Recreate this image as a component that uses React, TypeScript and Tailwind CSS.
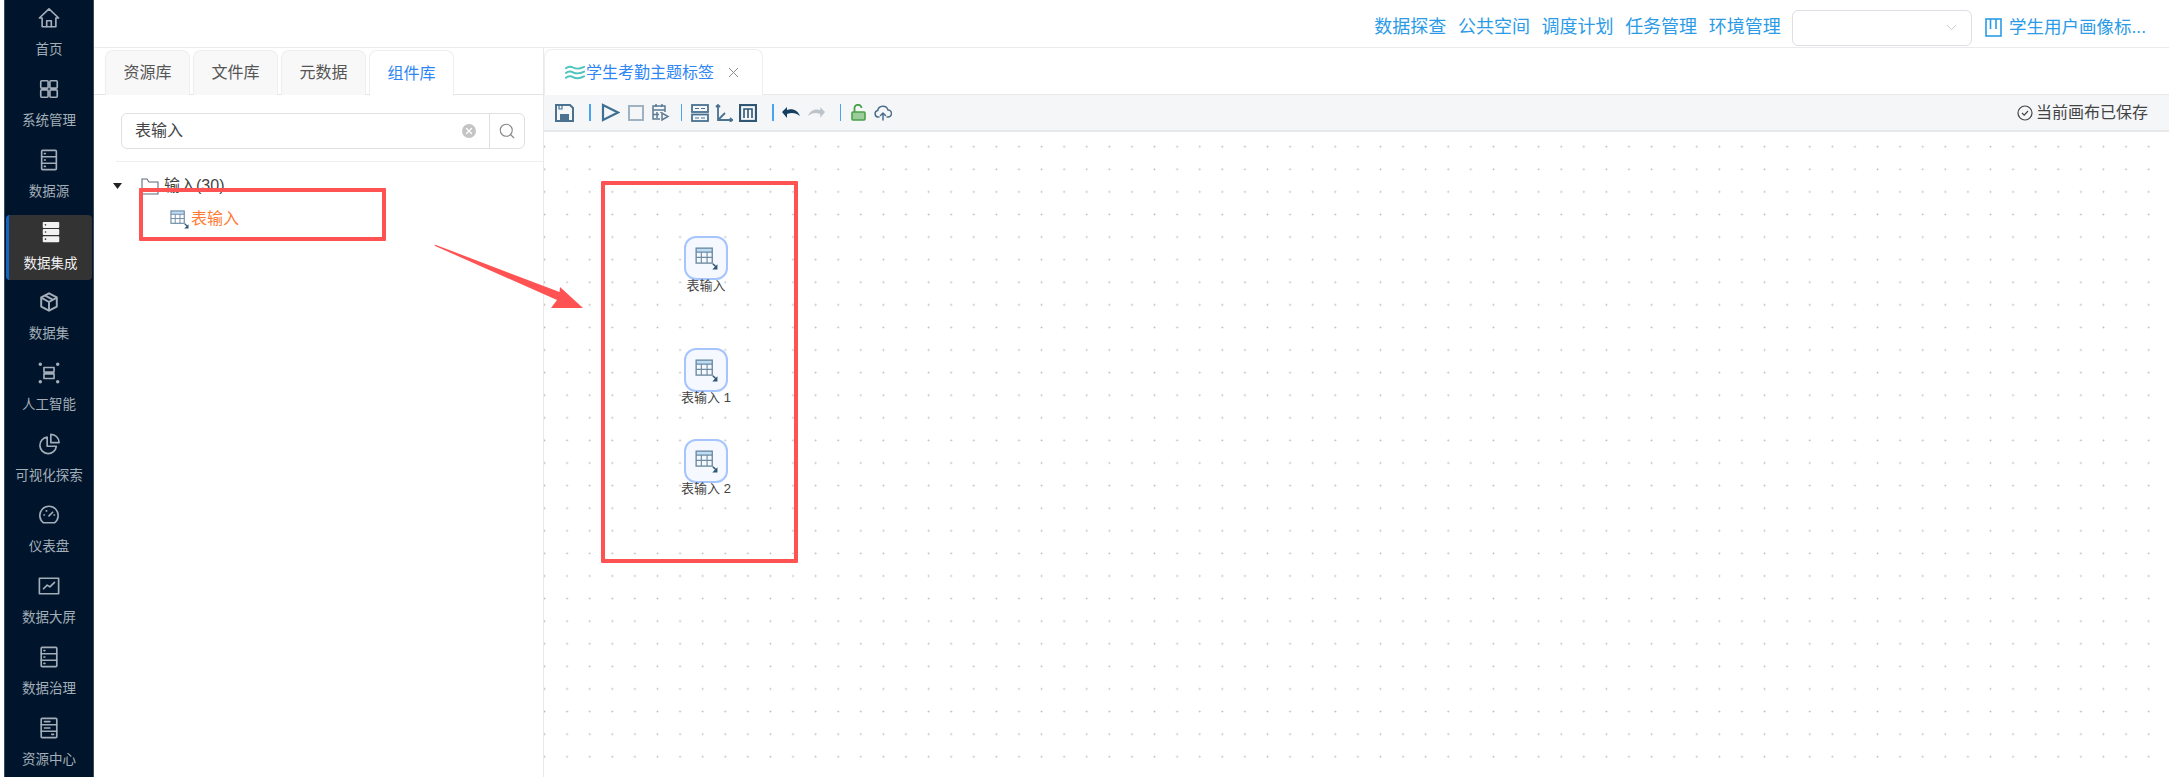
import { ReactNode } from "react";
import { ChevronDown, Search, X } from "lucide-react";

function Ico({ children, w = 22, h = 22, vb = "0 0 24 24", sw = 1.8 }: { children: ReactNode; w?: number; h?: number; vb?: string; sw?: number }) {
  return (
    <svg width={w} height={h} viewBox={vb} fill="none" stroke="currentColor" strokeWidth={sw} strokeLinejoin="round" strokeLinecap="round">
      {children}
    </svg>
  );
}

const sideIcons: Record<string, ReactNode> = {
  home: (
    <Ico>
      <path d="M1.5 12 12 2l10.5 10h-3v9.5h-15V12z" />
      <path d="M9.5 21.5V15h5v6.5" />
    </Ico>
  ),
  grid: (
    <Ico>
      <rect x="3" y="3" width="8" height="8" rx="1" />
      <rect x="13" y="3" width="8" height="8" rx="1" />
      <rect x="3" y="13" width="8" height="8" rx="1" />
      <rect x="13" y="13" width="8" height="8" rx="1" />
    </Ico>
  ),
  rows: (
    <Ico>
      <rect x="4" y="1.5" width="16" height="21" rx="1" />
      <path d="M4 8.5h16M4 15.5h16M7 5h1M7 12h1M7 19h1" />
    </Ico>
  ),
  solid: (
    <svg width="22" height="22" viewBox="0 0 24 24" fill="#f2f2f2">
      <rect x="3" y="1" width="18" height="6.5" rx="1" />
      <rect x="3" y="8.8" width="18" height="6.5" rx="1" />
      <rect x="3" y="16.6" width="18" height="6.5" rx="1" />
      <circle cx="6" cy="4.2" r="0.9" fill="#333" />
      <circle cx="6" cy="12" r="0.9" fill="#333" />
      <circle cx="6" cy="19.8" r="0.9" fill="#333" />
    </svg>
  ),
  box: (
    <Ico sw={2.1}>
      <path d="M12 2.5 20.5 7v10L12 21.5 3.5 17V7z" />
      <path d="M4 7.5 12 12l8-4.5M12 12v9M8 5l8 4.5" />
    </Ico>
  ),
  ai: (
    <Ico>
      <rect x="6.5" y="6" width="11" height="5" />
      <rect x="6.5" y="13" width="11" height="5" />
      <circle cx="2.5" cy="2.5" r="1" fill="currentColor" />
      <circle cx="21.5" cy="2.5" r="1" fill="currentColor" />
      <circle cx="2.5" cy="21.5" r="1" fill="currentColor" />
      <circle cx="21.5" cy="21.5" r="1" fill="currentColor" />
    </Ico>
  ),
  pie: (
    <Ico>
      <path d="M10 4.5a9 9 0 1 0 10 10H10z" />
      <path d="M14 1.5v9h9a9 9 0 0 0-9-9z" />
    </Ico>
  ),
  gauge: (
    <Ico>
      <path d="M6 20.5a10 10 0 1 1 12 0z" />
      <path d="m12 13 4-4M6.5 12h.5M9 7.5h.5M17.5 12h.5" />
    </Ico>
  ),
  chart: (
    <Ico>
      <rect x="1.5" y="3.5" width="21" height="17" />
      <path d="m6 15 4-4 3 2 5-5" />
    </Ico>
  ),
  rows2: (
    <Ico>
      <rect x="3.5" y="1.5" width="17" height="21" rx="1" />
      <path d="M3.5 8.5h17M3.5 15.5h17M6.5 5h1M6.5 12h1M6.5 19h1" />
    </Ico>
  ),
  rows3: (
    <Ico>
      <rect x="3.5" y="1.5" width="17" height="21" rx="1" />
      <path d="M3.5 8.5h17M3.5 15.5h17M7 5h6M7 12h6M15 19h2" />
    </Ico>
  ),
};

const sideItems = [
  { key: "home", label: "首页" },
  { key: "grid", label: "系统管理" },
  { key: "rows", label: "数据源" },
  { key: "solid", label: "数据集成", active: true },
  { key: "box", label: "数据集" },
  { key: "ai", label: "人工智能" },
  { key: "pie", label: "可视化探索" },
  { key: "gauge", label: "仪表盘" },
  { key: "chart", label: "数据大屏" },
  { key: "rows2", label: "数据治理" },
  { key: "rows3", label: "资源中心" },
];

function TableIcon({ size = 18 }: { size?: number }) {
  return (
    <svg width={size} height={size} viewBox="0 0 20 20" fill="none">
      <rect x="1" y="1" width="14" height="3.5" fill="#bfdcf5" />
      <rect x="1" y="1" width="14" height="13" stroke="#6d8ba3" strokeWidth="1.2" />
      <path d="M1 4.5h14M1 9h14M5.5 4.5V14M10.5 4.5V14" stroke="#6d8ba3" strokeWidth="1" />
      <path d="m15.5 14.5 2.5 2.5" stroke="#2f5673" strokeWidth="1.3" />
      <path d="M19.5 15v4.5H15z" fill="#2f5673" />
    </svg>
  );
}

function Sep() {
  return <div className="w-[1.5px] h-[17px] bg-[#4aa3f0]" />;
}

function TreeNode({ top, label }: { top: string; label: string }) {
  return (
    <div className={`absolute left-[112px] w-[100px] flex flex-col items-center ${top}`}>
      <div className="w-[44px] h-[44px] rounded-[12px] border-2 border-[#a6c4fd] bg-[#f5f9ff] flex items-center justify-center">
        <TableIcon size={23} />
      </div>
      <div className="mt-[-1px] text-[13px] leading-[14px] text-[#444]">{label}</div>
    </div>
  );
}

export default function App() {
  return (
    <div className="relative w-[2169px] h-[777px] overflow-hidden bg-white pl-[4px] flex font-['Liberation_Sans','Noto_Sans_CJK_SC',sans-serif]">
      {/* left nav */}
      <div className="w-[90px] h-full bg-[#00152b] shrink-0 border-x border-[#3b4a5c]">
        {sideItems.map((it) => (
          <div
            key={it.label}
            className={
              it.active
                ? "relative mx-[1px] h-[65px] mt-[2px] mb-[4px] pt-[6px] rounded-[4px] bg-[#333333] flex flex-col items-center text-[#f2f2f2] border-l-[3px] border-[#1565c0]"
                : "h-[71px] pt-[7px] flex flex-col items-center text-[#a3aeb9]"
            }
          >
            <div className="h-[22px] flex items-center justify-center">{sideIcons[it.key]}</div>
            <div className="mt-[11px] text-[13.5px] leading-[20px] whitespace-nowrap">{it.label}</div>
          </div>
        ))}
      </div>

      <div className="flex-1 min-w-0 flex flex-col">
        {/* top bar */}
        <div className="h-[48px] shrink-0 pt-[8px] border-b border-[#ebebeb] flex items-center justify-end gap-[11.6px] pr-[23px] text-[18px] text-[#2b9be8]">
          <span>数据探查</span>
          <span>公共空间</span>
          <span>调度计划</span>
          <span>任务管理</span>
          <span>环境管理</span>
          <div className="w-[180px] h-[36px] border border-[#dcdfe6] rounded-[6px] flex items-center justify-end pr-[11px] text-[#c4c7cc]">
            <ChevronDown size={17} strokeWidth={1.3} />
          </div>
          <div className="ml-[1px] flex items-center gap-[7px]">
            <svg width="17" height="19" viewBox="0 0 17 19" fill="none" stroke="currentColor" strokeWidth="1.6">
              <rect x="1" y="1" width="15" height="17" />
              <path d="M5.5 1v10M11 1v10" />
            </svg>
            <span className="text-[17.5px]">学生用户画像标...</span>
          </div>
        </div>

        <div className="flex-1 min-h-0 flex">
          {/* left panel */}
          <div className="w-[450px] shrink-0 border-r border-[#e8e8e8] flex flex-col">
            <div className="h-[47px] shrink-0 pt-[2px] pl-[11px] flex gap-[3px] border-b border-[#e4e4e4]">
              {["资源库", "文件库", "元数据"].map((t) => (
                <div key={t} className="w-[85px] h-[45px] rounded-t-[8px] border border-[#eeeeee] border-b-0 bg-[#f8f8f8] flex items-center justify-center text-[16px] text-[#555]">
                  {t}
                </div>
              ))}
              <div className="w-[85px] h-[46px] rounded-t-[8px] border border-[#eeeeee] border-b-0 bg-white flex items-center justify-center text-[16px] text-[#2e86f5]">
                组件库
              </div>
            </div>

            <div className="mt-[18px] ml-[27px] w-[404px] h-[36px] shrink-0 rounded-[6px] border border-[#e0e0e0] flex items-center text-[16px] text-[#444]">
              <div className="flex-1 pl-[13px]">表输入</div>
              <div className="w-[14px] h-[14px] rounded-full bg-[#c4c4c4] flex items-center justify-center text-white mr-[13px]">
                <X size={10} strokeWidth={3} />
              </div>
              <div className="w-[35px] h-full border-l border-[#e0e0e0] flex items-center justify-center text-[#888]">
                <Search size={18} strokeWidth={1.5} />
              </div>
            </div>
            <div className="mt-[12px] ml-[22px] border-b border-[#eeeeee]" />

            <div className="mt-[13px] ml-[19px] h-[22px] flex items-center text-[16px] text-[#444]">
              <svg width="9" height="6" viewBox="0 0 9 6" className="mr-[19px]">
                <path d="M0 0h9L4.5 6z" fill="#222" />
              </svg>
              <svg width="18" height="17" viewBox="0 0 18 17" fill="none" stroke="#5f6b78" strokeWidth="1.1" className="mr-[5px]">
                <path d="M1 16V1h5l2 3h9v12z" />
              </svg>
              <span>输入(30)</span>
            </div>
            <div className="mt-[11px] ml-[76px] h-[22px] flex items-center gap-[2px] text-[16px] text-[#ff7a33]">
              <TableIcon size={19} />
              <span>表输入</span>
            </div>
          </div>

          {/* canvas side */}
          <div className="flex-1 min-w-0 flex flex-col">
            <div className="h-[47px] shrink-0 border-b border-[#e8e8e8] flex items-end">
              <div className="w-[219px] h-[46px] rounded-t-[8px] border border-[#eeeeee] border-b-0 bg-white flex items-center pl-[20px] mb-[-1px]">
                <svg width="21" height="16" viewBox="0 0 22 16" fill="none" stroke="#4cc4c0" strokeWidth="2" strokeLinecap="round">
                  <path d="M1 3c3-2.5 5-2 8-.5s6 1.5 11-1" />
                  <path d="M1 8c3-2.5 5-2 8-.5s6 1.5 11-1" />
                  <path d="M1 13c3-2.5 5-2 8-.5s6 1.5 11-1" />
                </svg>
                <span className="text-[16px] text-[#2e86f5]">学生考勤主题标签</span>
                <X size={17} strokeWidth={1.4} className="ml-[11px] text-[#8c8c8c]" />
              </div>
            </div>

            <div className="h-[37px] shrink-0 bg-[#f4f6f8] border-b-2 border-[#e6e8ea] flex items-center pl-[11px] pr-[21px] text-[#3f6585]">
              <svg width="19" height="18" viewBox="0 0 19 18" fill="none" stroke="#4a7290" strokeWidth="2">
                <path d="M1 1h14l3 3v13H1z" />
                <path d="M4 1v4h3V1" strokeWidth="1.2" />
                <rect x="5" y="10" width="9" height="7" fill="#4a7290" stroke="none" />
              </svg>
              <div className="ml-[15px]"><Sep /></div>
              <svg width="19" height="19" viewBox="0 0 19 19" fill="none" stroke="#3f6f92" strokeWidth="2.2" className="ml-[10px]">
                <path d="M2 2v15l15-7.5z" />
              </svg>
              <svg width="16" height="16" viewBox="0 0 16 16" fill="none" stroke="#9fb2c2" strokeWidth="2" className="ml-[8px]">
                <rect x="1" y="1" width="14" height="14" />
              </svg>
              <svg width="19" height="19" viewBox="0 0 19 19" fill="none" stroke="#5c7a94" strokeWidth="1.5" className="ml-[7px]">
                <path d="M9 16H2V3h12v6M2 7h12M6 9v6M10 9v1M2 11.5h6M5 1v3M11 1v3" />
                <path d="M11 10v7l6-3.5z" fill="#f4f6f8" />
              </svg>
              <div className="ml-[11px]"><Sep /></div>
              <svg width="18" height="18" viewBox="0 0 18 18" fill="none" stroke="#4a7290" strokeWidth="1.8" className="ml-[9px]">
                <rect x="1" y="1" width="16" height="7" />
                <rect x="1" y="10.5" width="16" height="6.5" />
                <path d="M4 4.5h4M10 4.5h4M4 14h4M10 14h4" strokeWidth="1.2" />
              </svg>
              <svg width="18" height="18" viewBox="0 0 18 18" fill="none" stroke="#4a7290" strokeWidth="1.8" className="ml-[6px]">
                <path d="M3 1v15h15M3 16l7-7M1 3l2-2 2 2M15 14l2 2-2 2" />
              </svg>
              <svg width="18" height="18" viewBox="0 0 18 18" fill="none" stroke="#2f5673" strokeWidth="2.2" className="ml-[6px]">
                <rect x="1" y="1" width="16" height="16" />
                <path d="M5 14V5h8v9M9 5v9" strokeWidth="1.6" />
              </svg>
              <div className="ml-[15px]"><Sep /></div>
              <svg width="18" height="12" viewBox="0 0 18 12" fill="#163f5f" className="ml-[8px]">
                <path d="M0 5 5 0v3c6-2 11 1 13 6-4-3-8-4-13-2v4z" />
              </svg>
              <svg width="17" height="12" viewBox="0 0 18 12" fill="#bcc3c9" className="ml-[8px]">
                <path d="M18 5 13 0v3C7 1 2 4 0 9c4-3 8-4 13-2v4z" />
              </svg>
              <div className="ml-[15px]"><Sep /></div>
              <svg width="15" height="17" viewBox="0 0 15 17" fill="none" className="ml-[10px]">
                <path d="M3.5 8V4.5a3.5 3.5 0 0 1 7-.5" stroke="#4aa04a" strokeWidth="1.8" />
                <rect x="1" y="8" width="13" height="8" rx="1" fill="#9ccb9c" stroke="#4aa04a" strokeWidth="1.6" />
              </svg>
              <svg width="18" height="16" viewBox="0 0 18 16" fill="none" stroke="#4b6f8c" strokeWidth="1.5" strokeLinecap="round" className="ml-[8px]">
                <path d="M5 12H4a3.3 3.3 0 0 1-.3-6.5A5.3 5.3 0 0 1 14 5a3.5 3.5 0 0 1 0 7h-1" />
                <path d="M9 15V8M6.5 10.5 9 8l2.5 2.5" />
              </svg>
              <div className="ml-auto flex items-center gap-[3px] text-[16px] text-[#444]">
                <svg width="16" height="16" viewBox="0 0 16 16" fill="none" stroke="#444" strokeWidth="1.2">
                  <circle cx="8" cy="8" r="7" />
                  <path d="m5 8 2.2 2.2L11 6" />
                </svg>
                <span>当前画布已保存</span>
              </div>
            </div>

            {/* canvas */}
            <div className="relative flex-1 bg-white bg-[radial-gradient(circle,#bcbcbc_0.75px,transparent_1.15px)] bg-[size:22.6px_22.6px] bg-[position:-10.8px_3.4px]">
              <TreeNode top="top-[104px]" label="表输入" />
              <TreeNode top="top-[216px]" label="表输入 1" />
              <TreeNode top="top-[307px]" label="表输入 2" />
            </div>
          </div>
        </div>
      </div>

      {/* screenshot annotations */}
      <div className="absolute left-[139px] top-[188px] w-[247px] h-[53px] border-[4px] border-[#ff5252] rounded-[1px]" />
      <div className="absolute left-[601px] top-[181px] w-[197px] h-[382px] border-[4px] border-[#ff5252] rounded-[1px]" />
      <svg className="absolute left-[430px] top-[240px]" width="160" height="75" viewBox="430 240 160 75">
        <path d="M434 245.5 436 245 559.5 292 560 287 583 308 551 308 557 300z" fill="#ff5252" />
      </svg>
    </div>
  );
}
